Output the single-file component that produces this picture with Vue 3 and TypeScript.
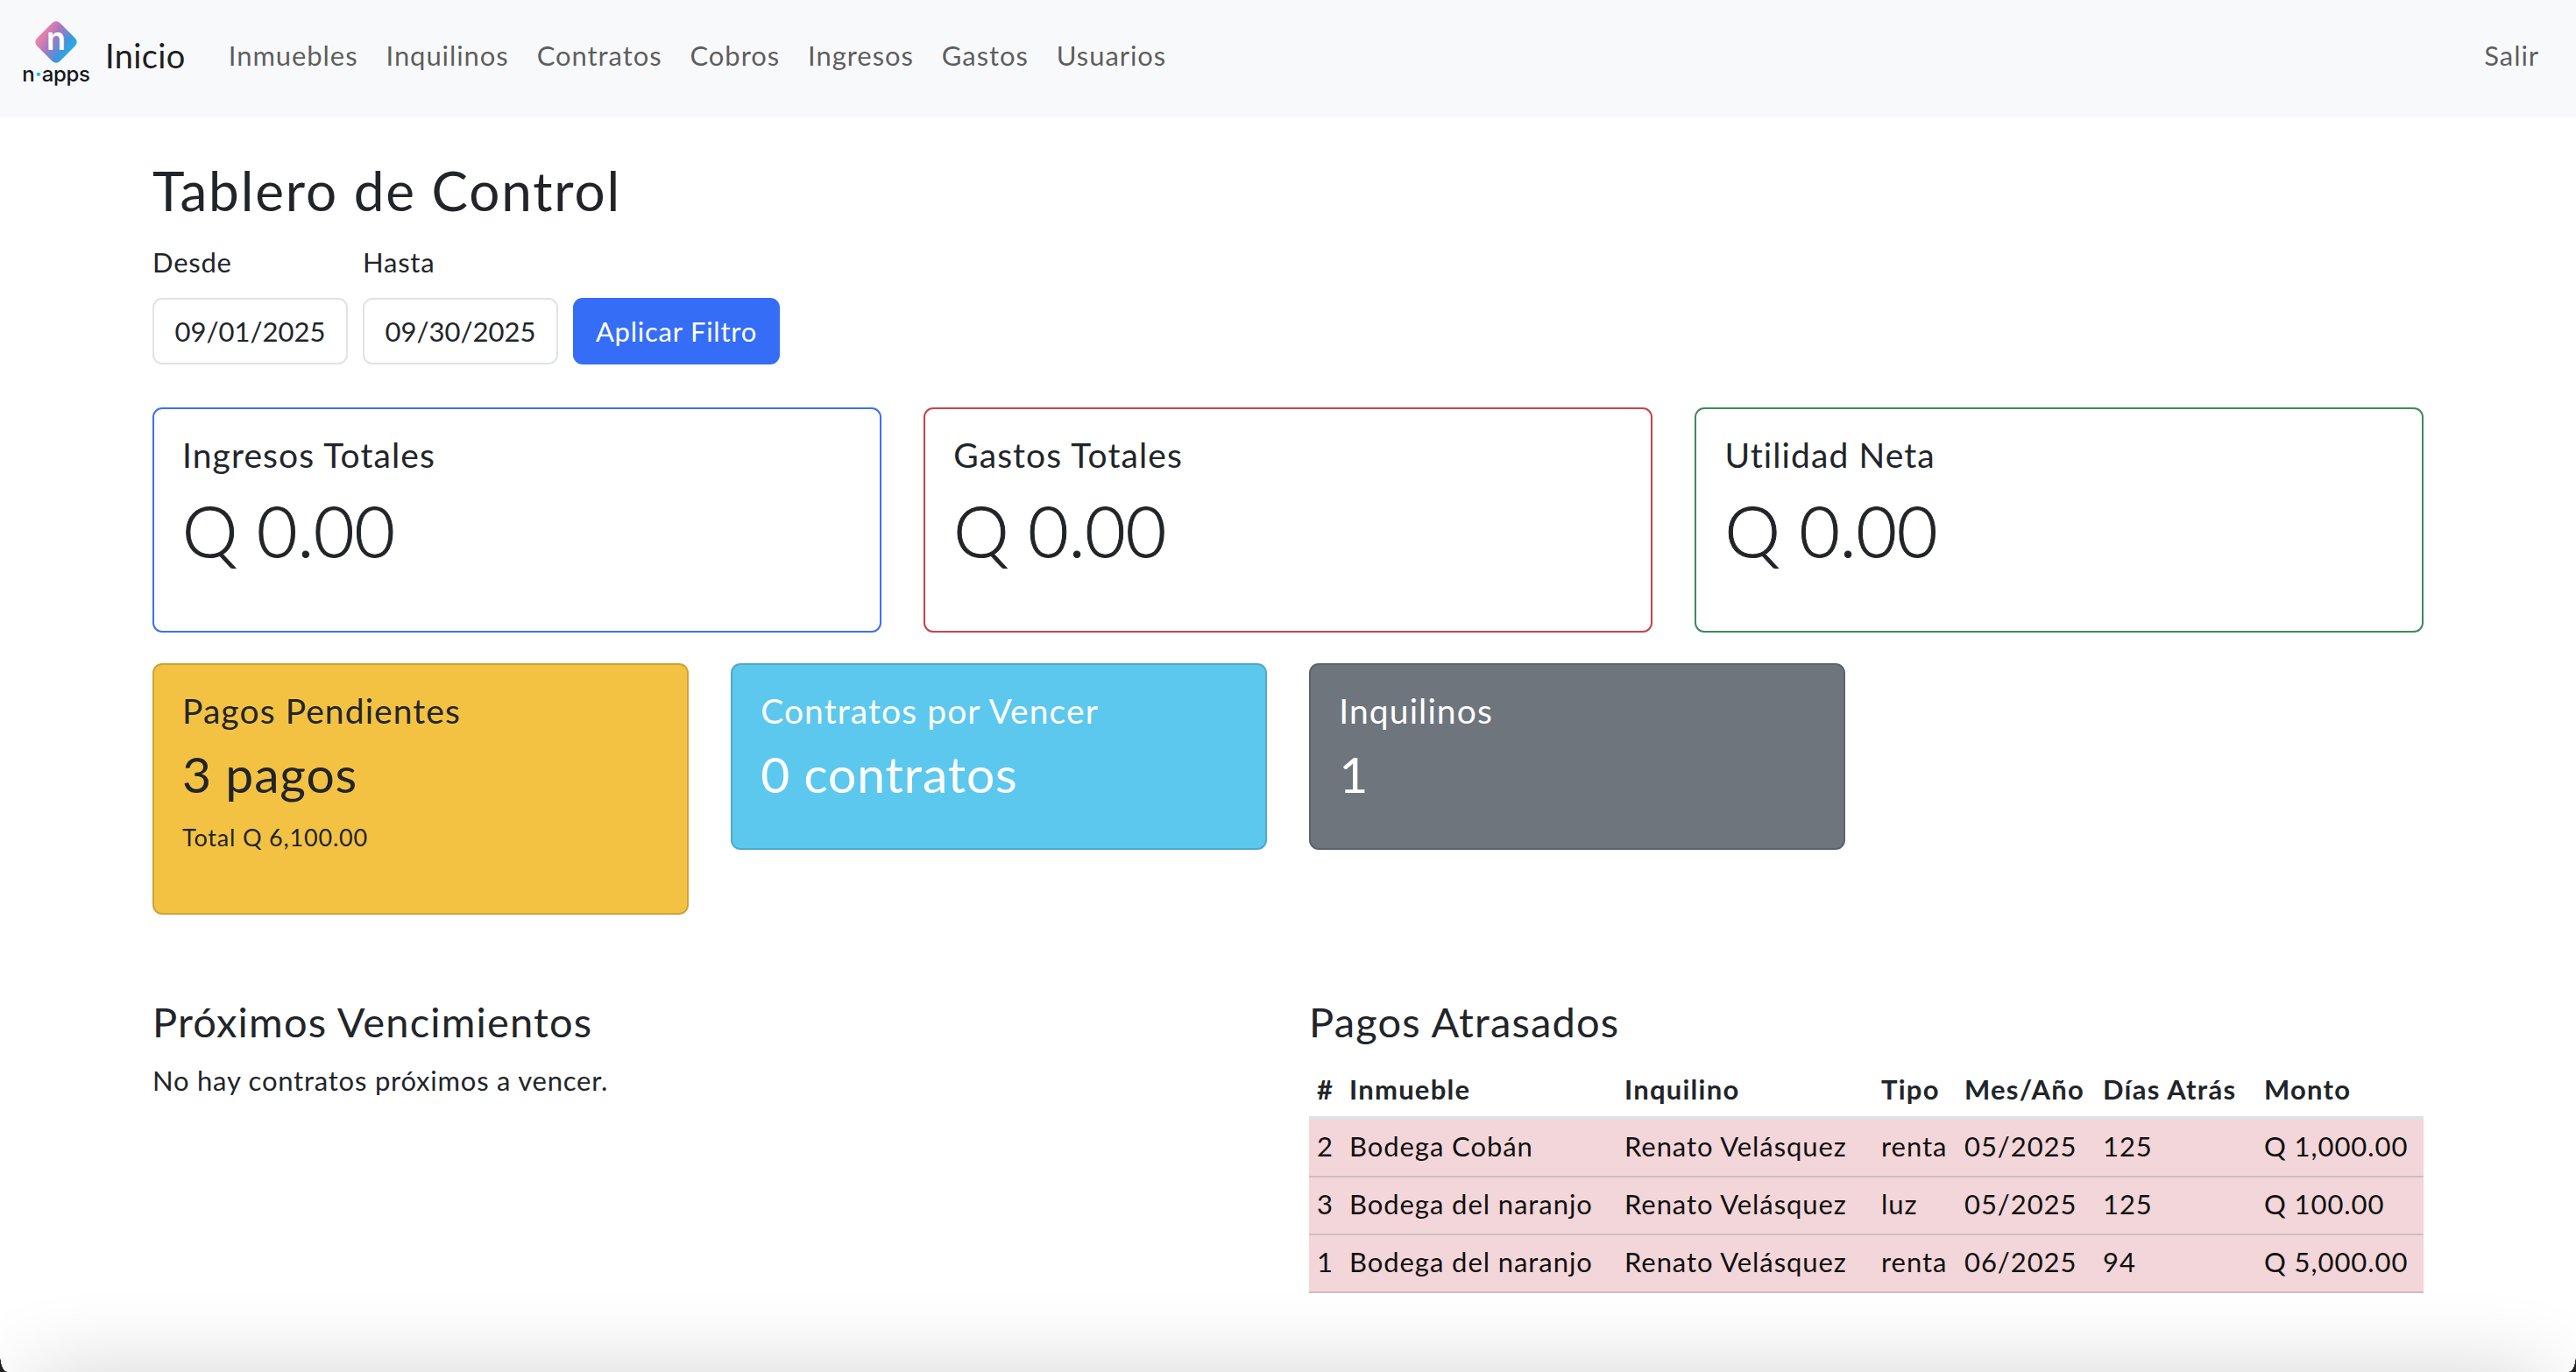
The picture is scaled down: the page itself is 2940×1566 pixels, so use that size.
<script setup lang="ts">
const links: string[] = ['Inmuebles', 'Inquilinos', 'Contratos', 'Cobros', 'Ingresos', 'Gastos', 'Usuarios']
const totals = [
  { title: 'Ingresos Totales', cls: 'b-blue' },
  { title: 'Gastos Totales', cls: 'b-red' },
  { title: 'Utilidad Neta', cls: 'b-green' },
]
const rows = [
  { id: 2, inm: 'Bodega Cobán', inq: 'Renato Velásquez', tipo: 'renta', mes: '05/2025', dias: 125, monto: 'Q 1,000.00' },
  { id: 3, inm: 'Bodega del naranjo', inq: 'Renato Velásquez', tipo: 'luz', mes: '05/2025', dias: 125, monto: 'Q 100.00' },
  { id: 1, inm: 'Bodega del naranjo', inq: 'Renato Velásquez', tipo: 'renta', mes: '06/2025', dias: 94, monto: 'Q 5,000.00' },
]
const widths = [37, 314, 293, 95, 158, 184, 191]
</script>

<template>
  <div class="page">
    <nav class="nav">
      <div class="logo">
        <svg class="logo-mark" width="50" height="50" viewBox="0 0 50 50">
          <defs>
            <linearGradient id="lg" x1="-0.2" y1="0.04" x2="1.17" y2="-0.25">
              <stop offset="0" stop-color="#fb82a6" />
              <stop offset="0.33" stop-color="#a878bf" />
              <stop offset="0.62" stop-color="#3f96e0" />
              <stop offset="1" stop-color="#0cc6de" />
            </linearGradient>
          </defs>
          <rect x="6.5" y="6.5" width="37" height="37" rx="6" fill="url(#lg)" transform="rotate(45 25 25)" />
          <text x="25" y="34" text-anchor="middle" class="logo-n">n</text>
        </svg>
        <div class="logo-word">n<span class="dot">·</span>apps</div>
      </div>
      <a class="brand">Inicio</a>
      <a v-for="l in links" :key="l" class="link">{{ l }}</a>
      <a class="link salir">Salir</a>
    </nav>

    <main class="main">
      <h1 class="title">Tablero de Control</h1>
      <div class="filters">
        <div class="field">
          <label>Desde</label>
          <div class="input">09/01/2025</div>
        </div>
        <div class="field">
          <label>Hasta</label>
          <div class="input">09/30/2025</div>
        </div>
        <button class="btn">Aplicar Filtro</button>
      </div>

      <div class="cards three">
        <div v-for="t in totals" :key="t.title" class="card big" :class="t.cls">
          <h5>{{ t.title }}</h5>
          <p class="amount">Q 0.00</p>
        </div>
      </div>

      <div class="cards four">
        <div class="card small yellow">
          <h5>Pagos Pendientes</h5>
          <p class="count">3 pagos</p>
          <small>Total Q 6,100.00</small>
        </div>
        <div class="card small cyan">
          <h5>Contratos por Vencer</h5>
          <p class="count">0 contratos</p>
        </div>
        <div class="card small gray">
          <h5>Inquilinos</h5>
          <p class="count">1</p>
        </div>
      </div>

      <div class="bottom">
        <section>
          <h4>Próximos Vencimientos</h4>
          <p class="none">No hay contratos próximos a vencer.</p>
        </section>
        <section>
          <h4>Pagos Atrasados</h4>
          <table>
            <colgroup>
              <col v-for="(w, i) in widths" :key="i" :style="{ width: w + 'px' }" />
            </colgroup>
            <thead>
              <tr>
                <th>#</th><th>Inmueble</th><th>Inquilino</th><th>Tipo</th><th>Mes/Año</th><th>Días Atrás</th><th>Monto</th>
              </tr>
            </thead>
            <tbody>
              <tr v-for="r in rows" :key="r.id">
                <td>{{ r.id }}</td><td>{{ r.inm }}</td><td>{{ r.inq }}</td><td>{{ r.tipo }}</td><td>{{ r.mes }}</td><td>{{ r.dias }}</td><td>{{ r.monto }}</td>
              </tr>
            </tbody>
          </table>
        </section>
      </div>
    </main>
    <div class="edge"></div>
    <div class="corner left"></div>
    <div class="corner right"></div>
  </div>
</template>

<style>
html, body { margin: 0; background: #fff; }
</style>

<style scoped>
.page {
  position: relative;
  width: 2940px;
  height: 1566px;
  overflow: hidden;
  background: #fff;
  color: #212529;
  font-family: "Lato", "Open Sans", sans-serif;
  font-size: 31px;
  line-height: 45px;
  letter-spacing: 0.025em;
}
.nav {
  display: flex;
  align-items: center;
  height: 135px;
  padding: 0 40px 8px 26px;
  background: #f8f9fa;
  box-sizing: border-box;
}
.logo { display: flex; flex-direction: column; align-items: center; width: 76px; margin: 0 18px 8px 0; letter-spacing: 0; }
.logo-mark { display: block; }
.logo-n { font-family: "Inter", sans-serif; font-weight: 600; font-size: 36px; fill: #fff; }
.logo-word { font-family: "Inter", sans-serif; font-weight: 500; font-size: 24px; line-height: 24px; color: #15171a; letter-spacing: -0.3px; white-space: nowrap; }
.dot { color: #12c2dc; font-weight: 800; }
.brand { font-size: 38px; color: rgba(0, 0, 0, 0.9); margin-right: 49px; letter-spacing: 0.01em; }
.link { color: rgba(0, 0, 0, 0.65); margin-right: 32px; letter-spacing: 0.03em; }
.salir { margin-left: auto; margin-right: 2px; }
.main { padding: 0 174px; }
.title { margin: 0; padding-top: 46px; font-size: 62px; line-height: 72px; font-weight: 400; letter-spacing: 0.03em; }
.filters { display: flex; align-items: flex-end; gap: 17px; margin-top: 24px; }
.field { display: flex; flex-direction: column; }
.field label { line-height: 45px; margin-bottom: 18px; }
.input {
  box-sizing: border-box;
  width: 223px;
  height: 76px;
  border: 2px solid #dfe2e8;
  border-radius: 11px;
  display: flex;
  align-items: center;
  justify-content: center;
  background: #fff;
  letter-spacing: 0;
}
.btn {
  width: 236px;
  height: 76px;
  border: none;
  border-radius: 11px;
  background: #356df6;
  color: #fff;
  font: inherit;
  letter-spacing: inherit;
}
.cards { display: grid; gap: 48.6px; align-items: start; }
.three { grid-template-columns: repeat(3, 1fr); margin-top: 49px; }
.four { grid-template-columns: repeat(4, 1fr); margin-top: 35px; }
.card { box-sizing: border-box; border: 2px solid; border-radius: 11px; padding: 30px 32px; }
.card h5 { margin: 0 0 15px; font-size: 39px; line-height: 45px; font-weight: 400; letter-spacing: 0.028em; }
.big { height: 257px; }
.amount { margin: -6px 0 0; font-size: 80px; line-height: 108px; font-weight: 300; letter-spacing: 0; -webkit-text-stroke: 1px #212529; }
.count { margin: -2px 0 15px; font-size: 57px; line-height: 72px; font-weight: 400; letter-spacing: 0.015em; }
small { display: block; font-size: 27px; line-height: 39px; margin-top: 17px; letter-spacing: 0.03em; }
.small.yellow { height: 287px; }
.small { height: 213px; }
.b-blue { border-color: #3a72f6; }
.b-red { border-color: #c8434d; }
.b-green { border-color: #3f8a5f; }
.yellow { background: #f4c243; border-color: #cfa238; }
.cyan { background: #5dc8ee; border-color: #4fa9cb; color: #fff; }
.gray { background: #6e757d; border-color: #5d6369; color: #fff; }
.bottom { display: grid; grid-template-columns: repeat(2, 1fr); gap: 48px; margin-top: 95px; }
h4 { margin: 0; font-size: 47px; line-height: 54px; font-weight: 400; letter-spacing: 0.025em; }
.none { margin: 18px 0 0; }
table { width: 1272px; table-layout: fixed; border-collapse: separate; border-spacing: 0; margin-top: 19px; }
th { text-align: left; font-weight: 700; padding: 0 9px; height: 66px; box-sizing: border-box; border-bottom: 4px solid #dee2e6; white-space: nowrap; letter-spacing: 0.04em; }
td { padding: 0 9px 3px; height: 66px; box-sizing: border-box; background: #f3d6d9; border-bottom: 2px solid #d2bcbf; white-space: nowrap; color: #111; letter-spacing: 0.03em; }
.edge {
  position: absolute;
  left: 30px;
  right: 30px;
  top: 1576px;
  height: 60px;
  border-radius: 30px;
  box-shadow: 0 0 100px 0 rgba(0, 0, 0, 0.24);
}
.corner { position: absolute; bottom: 0; width: 8px; height: 20px; }
.corner.left { left: 0; background: radial-gradient(ellipse 8px 20px at 100% 0, transparent 96%, #222 100%); }
.corner.right { right: 0; background: radial-gradient(ellipse 8px 20px at 0 0, transparent 96%, #222 100%); }
</style>
